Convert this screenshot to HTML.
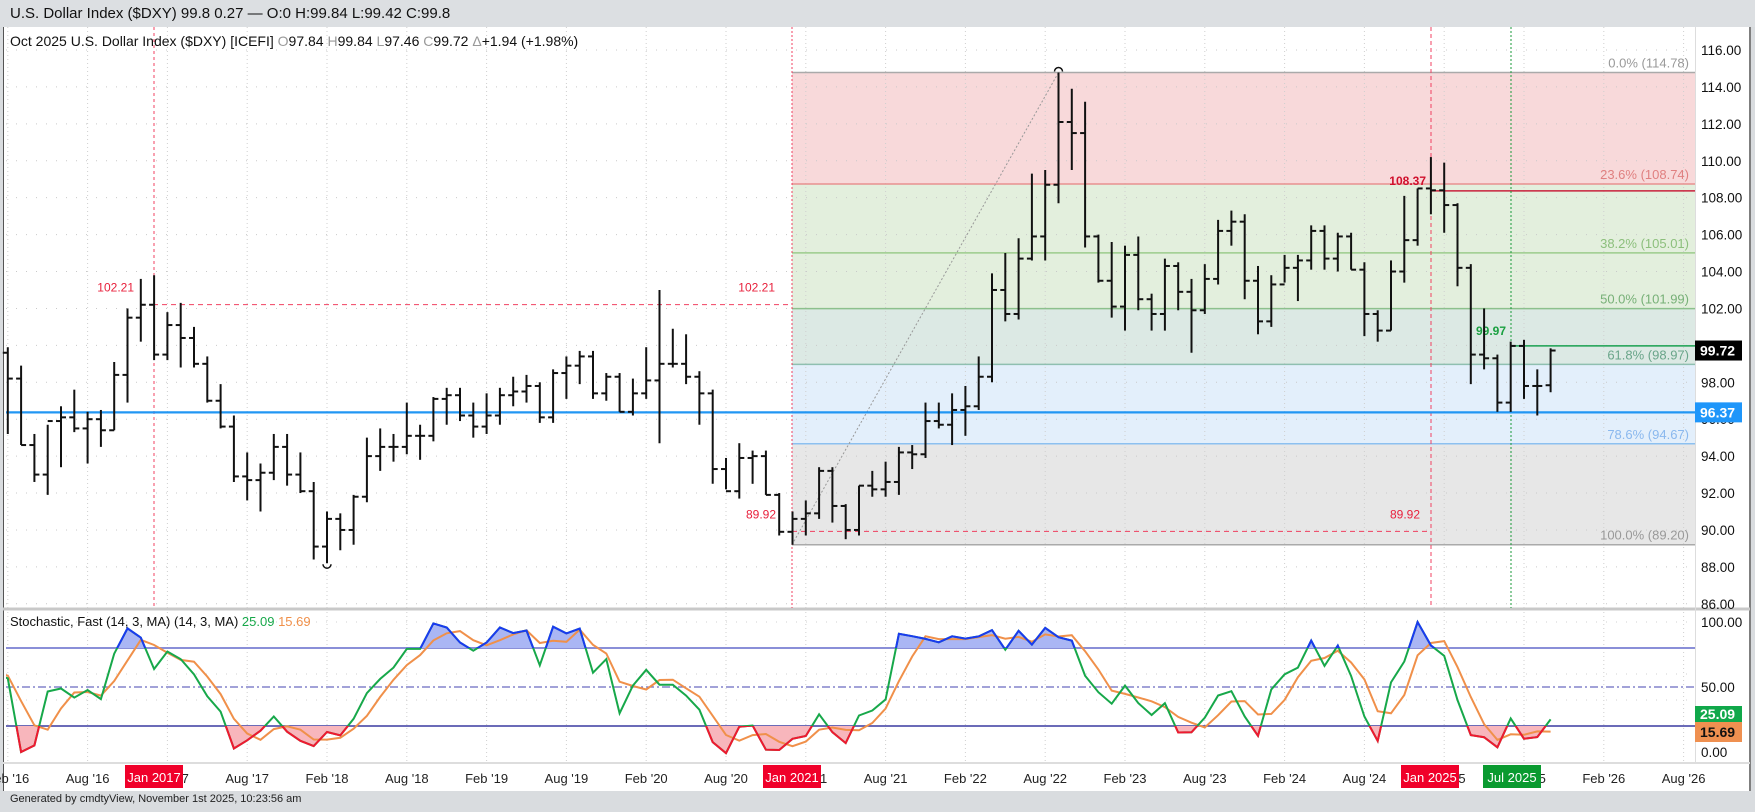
<!DOCTYPE html>
<html><head><meta charset="utf-8"><style>
html,body{margin:0;padding:0;width:1755px;height:812px;overflow:hidden;background:#d9dcdf;font-family:"Liberation Sans",sans-serif}
#top{position:absolute;left:0;top:0;width:1755px;height:27px;background:#dcdfe2;font-size:15px;line-height:27px;color:#111}
#top span{position:absolute;left:10px;top:0}
#foot{position:absolute;left:10px;top:793px;font-size:11px;color:#222}
svg{position:absolute;left:0;top:0}
</style></head><body>
<div id="top"><span>U.S. Dollar Index ($DXY) 99.8 0.27 — O:0 H:99.84 L:99.42 C:99.8</span></div>
<div id="foot">Generated by cmdtyView, November 1st 2025, 10:23:56 am</div>
<svg id="s" width="1755" height="812" xmlns="http://www.w3.org/2000/svg"></svg>
<script>
var D=`98.7 100.5 98.2 99.6
99.6 99.9 95.2 98.2
98.2 98.9 94.6 94.6
94.6 95.2 92.6 93.0
93.0 95.7 91.9 95.9
95.9 96.7 93.4 96.1
96.1 97.6 95.3 95.5
95.5 96.4 93.6 96.0
96.0 96.5 94.5 95.4
95.4 99.1 95.4 98.4
98.4 102.0 96.9 101.5
101.5 103.6 100.2 102.2
102.2 103.8 99.2 99.5
99.5 101.8 99.2 101.1
101.1 102.3 98.8 100.4
100.4 101.0 98.8 99.0
99.0 99.4 96.9 97.0
97.0 97.9 95.5 95.6
95.6 96.2 92.6 92.9
92.9 94.2 91.6 92.7
92.7 93.6 91.0 93.1
93.1 95.2 92.7 94.5
94.5 95.2 92.4 93.0
93.0 94.2 92.0 92.1
92.1 92.6 88.4 89.1
89.1 91.0 88.2 90.6
90.6 90.9 88.9 90.0
90.0 91.9 89.2 91.8
91.8 95.0 91.5 94.0
94.0 95.5 93.2 94.5
94.5 95.2 93.7 94.5
94.5 96.9 94.1 95.1
95.1 95.7 93.8 95.1
95.1 97.2 94.8 97.1
97.1 97.7 95.7 97.3
97.3 97.7 95.9 96.2
96.2 96.9 95.0 95.6
95.6 97.4 95.2 96.2
96.2 97.7 95.7 97.3
97.3 98.3 96.7 97.5
97.5 98.4 96.9 97.8
97.8 98.0 95.8 96.1
96.1 98.7 95.8 98.5
98.5 99.4 97.1 98.9
98.9 99.7 97.9 99.4
99.4 99.7 97.1 97.4
97.4 98.5 97.0 98.3
98.3 98.5 96.4 96.4
96.4 98.2 96.2 97.4
97.4 99.9 97.1 98.1
98.1 103.0 94.7 99.0
99.0 100.9 98.8 99.0
99.0 100.6 97.9 98.3
98.3 98.6 95.7 97.4
97.4 97.6 92.5 93.3
93.3 93.9 92.2 92.1
92.1 94.7 91.7 93.9
93.9 94.3 92.5 94.0
94.0 94.3 91.9 91.9
91.9 92.0 89.7 89.9
89.9 91.0 89.2 90.6
90.6 91.6 89.7 90.9
90.9 93.4 90.6 93.2
93.2 93.4 90.4 91.3
91.3 91.4 89.5 90.0
90.0 92.4 89.7 92.4
92.4 93.2 91.8 92.2
92.2 93.7 91.8 92.6
92.6 94.5 91.9 94.2
94.2 94.6 93.3 94.1
94.1 96.9 93.9 95.9
95.9 96.9 95.5 95.7
95.7 97.4 94.6 96.5
96.5 97.8 95.1 96.7
96.7 99.4 96.5 98.3
98.3 103.9 98.0 103.0
103.0 105.0 101.3 101.7
101.7 105.8 101.4 104.7
104.7 109.3 104.6 105.9
105.9 109.5 104.6 108.7
108.7 114.78 107.7 112.1
112.1 113.9 109.5 111.5
111.5 113.2 105.3 105.9
105.9 106.0 103.4 103.5
103.5 105.6 101.5 102.1
102.1 105.4 100.8 104.9
104.9 105.9 101.9 102.5
102.5 102.8 100.8 101.7
101.7 104.7 100.8 104.3
104.3 104.5 101.9 102.9
102.9 103.6 99.6 101.9
101.9 104.4 101.7 103.6
103.6 106.8 103.3 106.2
106.2 107.3 105.4 106.7
106.7 107.1 102.5 103.5
103.5 104.3 100.6 101.3
101.3 103.8 101.0 103.3
103.3 104.9 103.4 104.2
104.2 104.9 102.4 104.6
104.6 106.5 104.1 106.2
106.2 106.5 104.1 104.7
104.7 106.1 104.0 105.9
105.9 106.1 104.1 104.1
104.1 104.5 100.5 101.7
101.7 101.9 100.2 100.8
100.8 104.6 100.8 104.0
104.0 108.1 103.4 105.7
105.7 108.5 105.4 108.5
108.5 110.2 107.1 108.4
108.4 109.9 106.1 107.6
107.6 107.7 103.2 104.2
104.2 104.4 97.9 99.5
99.5 102.0 98.7 99.3
99.3 99.5 96.4 96.9
96.9 100.2 96.4 99.97
99.97 100.3 97.1 97.8
97.8 98.7 96.2 97.8
97.84 99.84 97.46 99.72`.trim().split('\n').map(l=>l.split(' ').map(Number));
var X=m=>87.6+13.3*(m-7);
var Y=p=>50+(116-p)*18.46;
var SY=v=>752-v*1.3;
var L=6,R=1695,PT=27,PB=608,ST=612,SB=763;
var o=[];
function r(x,y,w,h,f,e){o.push(`<rect x="${x}" y="${y}" width="${w}" height="${h}" fill="${f}" ${e||''}/>`)}
function ln(x1,y1,x2,y2,c,w,e){o.push(`<line x1="${x1}" y1="${y1}" x2="${x2}" y2="${y2}" stroke="${c}" stroke-width="${w||1}" ${e||''}/>`)}
function t(x,y,s,c,sz,e){o.push(`<text x="${x}" y="${y}" fill="${c}" font-size="${sz||13}" ${e||''}>${s}</text>`)}
r(3,27,1748,764,'#fff');
ln(3.5,27,3.5,791,'#555',1);ln(1750,27,1750,791,'#555',1.5);
ln(3,609,1750,609,'#c8c8c8',3);
ln(3,763,1750,763,'#ddd',2);
ln(R+0.5,27,R+0.5,763,'#ddd',1);
var fx=792;
var fb=[[114.78,108.74,'#f8d9da'],[108.74,101.99,'#e3efdd'],[101.99,98.97,'#dce9e4'],[98.97,94.67,'#e3effb'],[94.67,89.2,'#e7e7e7']];
fb.forEach(b=>r(fx,Y(b[0]),R-fx,Y(b[1])-Y(b[0]),b[2]));
for(var p=86;p<=116;p+=2)ln(L,Y(p),R,Y(p),'#c9c9c9',1,'stroke-dasharray="1,9"');
var ticks=[];for(var m=1;m<=127;m+=6)ticks.push(m);
ticks.forEach(m=>{ln(X(m),PT,X(m),PB,'#cfcfcf',1,'stroke-dasharray="1,3"');ln(X(m),ST,X(m),SB,'#cfcfcf',1,'stroke-dasharray="1,3"')});
[20,40,60,80,100].forEach(v=>ln(L,SY(v),R,SY(v),'#d0d0d0',1,'stroke-dasharray="1,9"'));
var fl=[[114.78,'#aaa','0.0% (114.78)','#999'],[108.74,'#e89090','23.6% (108.74)','#e08080'],[105.01,'#9ccc8c','38.2% (105.01)','#8cbf7c'],[101.99,'#8cc08c','50.0% (101.99)','#77b077'],[98.97,'#8fbfb0','61.8% (98.97)','#6aa58a'],[94.67,'#8cc0f0','78.6% (94.67)','#8ab8ee'],[89.2,'#aaa','100.0% (89.20)','#999']];
fl.forEach(f=>{ln(fx,Y(f[0]),R,Y(f[0]),f[1],1.5);t(1689,Y(f[0])-5,f[2],f[3],13,'text-anchor="end"')});
ln(153,Y(102.21),fx,Y(102.21),'#f04060',1,'stroke-dasharray="5,4"');
t(134,Y(102.21)-13,'102.21','#e8203c',12,'text-anchor="end"');t(775,Y(102.21)-13,'102.21','#e8203c',12,'text-anchor="end"');
ln(fx,Y(89.92),1431,Y(89.92),'#f04060',1,'stroke-dasharray="5,4"');
t(776,Y(89.92)-13,'89.92','#e8203c',12,'text-anchor="end"');t(1420,Y(89.92)-13,'89.92','#e8203c',12,'text-anchor="end"');
ln(1431,Y(108.37),R,Y(108.37),'#c8203c',1.5);t(1426,Y(108.37)-6,'108.37','#d0102c',12,'text-anchor="end" font-weight="bold"');
ln(1511,Y(99.97),R,Y(99.97),'#1aa050',1.5);t(1506,Y(99.97)-11,'99.97','#1aa040',12,'text-anchor="end" font-weight="bold"');
ln(fx,Y(89.2),X(80),Y(114.78),'#999',1,'stroke-dasharray="2,2"');
[[154,'#f04060','3,3'],[fx,'#f04060','2,2'],[1431,'#f04060','4,3'],[1511,'#1a9a3a','2,2']].forEach(v=>ln(v[0],PT,v[0],PB,v[1],1,`stroke-dasharray="${v[2]}"`));
ln(L,Y(96.37),R,Y(96.37),'#2196f3',2.2);
D.forEach((d,i)=>{var x=X(i);ln(x,Y(d[1]),x,Y(d[2]),'#111',2);ln(x-5,Y(d[0]),x,Y(d[0]),'#111',2);ln(x,Y(d[3]),x+5,Y(d[3]),'#111',2)});
var ph=X(80),pl=X(25);
o.push(`<path d="M${ph-4},${Y(114.78)-1} a4,4 0 0 1 8,0" fill="none" stroke="#111" stroke-width="1.5"/>`);
o.push(`<path d="M${pl-4},${Y(88.2)+1} a4,4 0 0 0 8,0" fill="none" stroke="#111" stroke-width="1.5"/>`);
for(var p=86;p<=116;p+=2)t(1701,Y(p)+5,p.toFixed(2),'#111',13.5);
function tag(y,s,bg,c){r(1695,y-10,47,20,bg);t(1700,y+5,s,c,14,'font-weight="bold"')}
tag(Y(99.72),'99.72','#000','#fff');tag(Y(96.37),'96.37','#1e96fa','#fff');
o.push(`<text x="10" y="46" font-size="14" fill="#111">Oct 2025 U.S. Dollar Index ($DXY) [ICEFI] <tspan fill="#999">O</tspan>97.84 <tspan fill="#999">H</tspan>99.84 <tspan fill="#999">L</tspan>97.46 <tspan fill="#999">C</tspan>99.72 <tspan fill="#999">Δ</tspan>+1.94 (+1.98%)</text>`);
var K=[],Dd=[];
D.forEach((d,i)=>{var s=Math.max(0,i-13),hh=-1e9,ll=1e9;for(var j=s;j<=i;j++){hh=Math.max(hh,D[j][1]);ll=Math.min(ll,D[j][2])}K.push((d[3]-ll)/(hh-ll)*100)});
K[K.length-1]=25.09;
K.forEach((k,i)=>{var a=K.slice(Math.max(0,i-2),i+1);Dd.push(a.reduce((x,y)=>x+y,0)/a.length)});
Dd[Dd.length-1]=15.69;
var kp=K.map((k,i)=>X(i).toFixed(1)+','+SY(k).toFixed(1)).join(' ');
var dp=Dd.map((k,i)=>X(i).toFixed(1)+','+SY(k).toFixed(1)).join(' ');
o.push(`<defs><clipPath id="ca"><rect x="0" y="0" width="1700" height="${SY(80)}"/></clipPath><clipPath id="cb"><rect x="0" y="${SY(20)}" width="1700" height="100"/></clipPath><clipPath id="cs"><rect x="${L}" y="${ST}" width="${R-L}" height="${SB-ST}"/></clipPath></defs>`);
var x0=X(0),x1=X(K.length-1);
o.push(`<g clip-path="url(#cs)">`);
ln(L,SY(80),R,SY(80),'#8a8fd8',2);ln(L,SY(20),R,SY(20),'#3a3aa0',1.5);
ln(L,SY(50),R,SY(50),'#6a6ac0',1.2,'stroke-dasharray="8,3,2,3"');
o.push(`<polygon points="${x0},${SY(80)} ${kp} ${x1},${SY(80)}" fill="#aab6f4" clip-path="url(#ca)"/>`);
o.push(`<polygon points="${x0},${SY(20)} ${kp} ${x1},${SY(20)}" fill="#f8b6bc" clip-path="url(#cb)"/>`);
o.push(`<polyline points="${dp}" fill="none" stroke="#f0904a" stroke-width="2"/>`);
o.push(`<polyline points="${kp}" fill="none" stroke="#17a84a" stroke-width="2"/>`);
o.push(`<polyline points="${kp}" fill="none" stroke="#1a3af0" stroke-width="2" clip-path="url(#ca)"/>`);
o.push(`<polyline points="${kp}" fill="none" stroke="#f01830" stroke-width="2" clip-path="url(#cb)"/>`);
o.push(`</g>`);
t(1701,SY(100)+5,'100.00','#111',13.5);t(1701,SY(50)+5,'50.00','#111',13.5);t(1701,SY(0)+5,'0.00','#111',13.5);
r(1695,706,47,16,'#10a84a');t(1700,719,'25.09','#fff',14,'font-weight="bold"');
r(1695,722,47,20,'#ef9050');t(1700,737,'15.69','#111',14,'font-weight="bold"');
o.push(`<text x="10" y="626" font-size="13" fill="#111">Stochastic, Fast (14, 3, MA)  (14, 3, MA) <tspan fill="#17a84a">25.09</tspan> <tspan fill="#f0904a">15.69</tspan></text>`);
ticks.forEach(m=>{var lab;if(m%12==7)lab="Aug '"+(16+Math.floor(m/12));else lab="Feb '"+(16+Math.floor(m/12));if(X(m)<1740)t(X(m),783,lab,'#222',13,'text-anchor="middle"')});
function dtag(x,s,bg){r(x,765,58,23,bg);t(x+29,782,s,'#fff',13,'text-anchor="middle"')}
dtag(125,'Jan 2017','#f0002a');dtag(763,'Jan 2021','#f0002a');dtag(1401,'Jan 2025','#f0002a');dtag(1483,'Jul 2025','#0a9a30');
document.getElementById('s').innerHTML=o.join('');
</script>
</body></html>
